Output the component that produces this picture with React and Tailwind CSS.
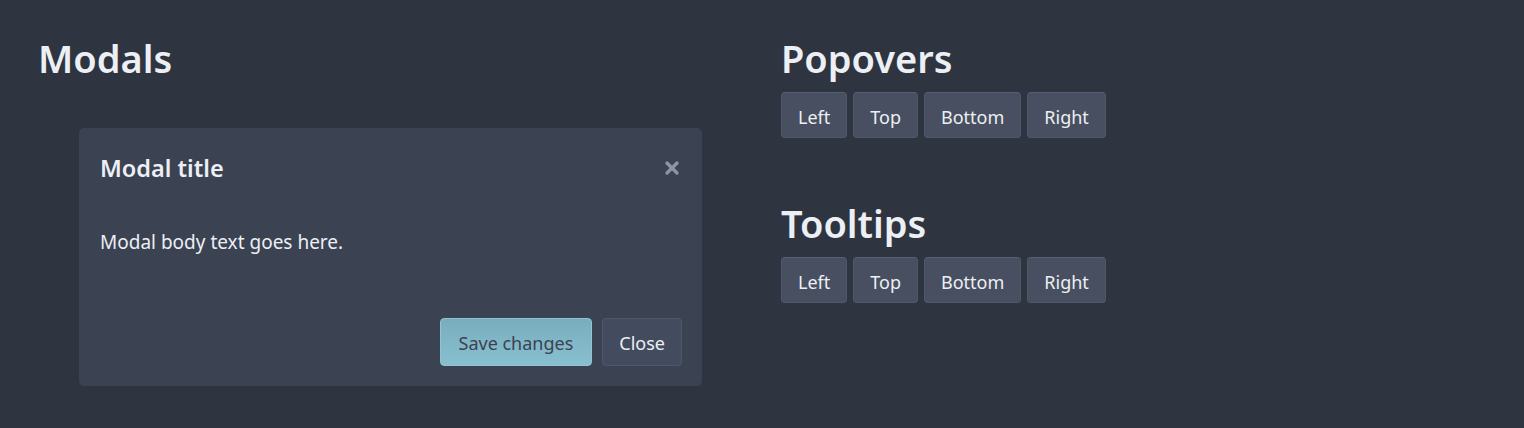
import { X } from "lucide-react";

const btn =
  "h-[46px] px-4 pt-[3px] rounded-[4px] border border-[#4f586b] border-t-[#566074] bg-[#484f60] text-[18px] text-[#eceff4] leading-none";

function ButtonRow() {
  return (
    <div className="flex gap-[6px]">
      <button className={btn}>Left</button>
      <button className={btn}>Top</button>
      <button className={btn}>Bottom</button>
      <button className={btn}>Right</button>
    </div>
  );
}

export default function App() {
  return (
    <div
      className="h-[428px] bg-[#2e3440] text-[#eceff4] flex px-[38px]"
      style={{ fontFamily: '"Noto Sans", "Open Sans", sans-serif' }}
    >
      {/* modals column */}
      <div className="w-[743px] pt-[35px]">
        <h1 className="text-[38px] font-semibold leading-[46px]">Modals</h1>
        <div className="ml-[41px] mt-[47px] w-[623px] h-[258px] rounded-[5px] bg-[#3b4252] flex flex-col">
          <div className="flex items-center justify-between px-[21px] pt-[24px]">
            <h5 className="text-[23.5px] font-semibold leading-[32px]">Modal title</h5>
            <X className="w-[20px] h-[20px] text-[#8d94a3] mr-[-1px]" strokeWidth={4} />
          </div>
          <div className="px-[21px] pt-[44px] text-[19px] leading-[28px]">
            Modal body text goes here.
          </div>
          <div className="mt-auto flex justify-end gap-[10px] px-[20px] pb-[20px]">
            <button className="h-[48px] px-[18px] pt-[2px] rounded-[4px] border border-[#8fc4d3] bg-gradient-to-b from-[#79adbd] to-[#88c0d0] text-[18px] leading-none text-[#3b4252]">
              Save changes
            </button>
            <button className="h-[48px] px-4 pt-[2px] rounded-[4px] border border-[#4f586b] bg-[#434c5e] text-[18px] leading-none text-[#eceff4]">
              Close
            </button>
          </div>
        </div>
      </div>

      {/* popovers / tooltips column */}
      <div className="pt-[35px]">
        <h2 className="text-[38px] font-semibold leading-[46px] mb-[11px]">Popovers</h2>
        <ButtonRow />
        <h2 className="text-[38px] font-semibold leading-[46px] mt-[62px] mb-[11px]">Tooltips</h2>
        <ButtonRow />
      </div>
    </div>
  );
}
